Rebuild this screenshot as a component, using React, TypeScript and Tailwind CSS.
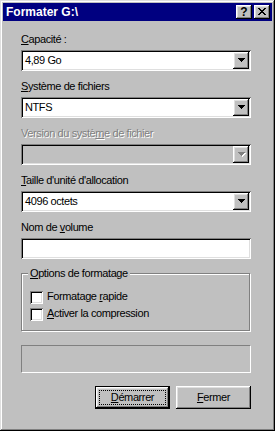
import React from "react";

const raised =
  "shadow-[inset_-1px_-1px_#000,inset_1px_1px_#fff,inset_-2px_-2px_#808080,inset_2px_2px_#dfdfdf]";
const sunken =
  "shadow-[inset_1px_1px_#808080,inset_-1px_-1px_#fff,inset_2px_2px_#000,inset_-2px_-2px_#dfdfdf]";

function Arrow({ disabled }: { disabled?: boolean }) {
  const rows = [
    [0, 7],
    [1, 5],
    [2, 3],
    [3, 1],
  ];
  return (
    <svg width="8" height="5" viewBox="0 0 8 5" shapeRendering="crispEdges">
      {disabled &&
        rows.map(([y, w], i) => (
          <rect key={"s" + i} x={(7 - w) / 2 + 1} y={y + 1} width={w} height={1} fill="#fff" />
        ))}
      {rows.map(([y, w], i) => (
        <rect key={i} x={(7 - w) / 2} y={y} width={w} height={1} fill={disabled ? "#808080" : "#000"} />
      ))}
    </svg>
  );
}

function Combo({ value, disabled }: { value?: string; disabled?: boolean }) {
  return (
    <div
      className={`h-[21px] w-[230px] flex p-[2px] ${disabled ? "bg-[#c0c0c0]" : "bg-white"} ${sunken}`}
    >
      <div className="flex-1 pl-[2px] leading-[17px] whitespace-nowrap">{value}</div>
      <div className={`w-[16px] h-[17px] bg-[#c0c0c0] ${raised} flex items-center justify-center pl-[1px]`}>
        <Arrow disabled={disabled} />
      </div>
    </div>
  );
}

function Label({ children, disabled }: { children: React.ReactNode; disabled?: boolean }) {
  return (
    <div
      className={`h-[13px] leading-[13px] whitespace-nowrap ${
        disabled ? "text-[#808080] [text-shadow:1px_1px_0_#fff]" : "text-black"
      }`}
    >
      {children}
    </div>
  );
}

function Checkbox({ children }: { children: React.ReactNode }) {
  return (
    <div className="flex items-start h-[14px] gap-[4px]">
      <div className={`mt-[1px] w-[13px] h-[13px] bg-white ${sunken}`} />
      <div className="leading-[13px] whitespace-nowrap">{children}</div>
    </div>
  );
}

function CloseGlyph() {
  const px: [number, number][] = [];
  const pattern = [
    "XX....XX",
    ".XX..XX.",
    "..XXXX..",
    "...XX...",
    "..XXXX..",
    ".XX..XX.",
    "XX....XX",
  ];
  pattern.forEach((row, y) =>
    row.split("").forEach((c, x) => {
      if (c === "X") px.push([x, y]);
    })
  );
  return (
    <svg width="8" height="7" viewBox="0 0 8 7" shapeRendering="crispEdges">
      {px.map(([x, y], i) => (
        <rect key={i} x={x} y={y} width={1} height={1} fill="#000" />
      ))}
    </svg>
  );
}

export default function App() {
  return (
    <div
      className={`w-[275px] h-[431px] bg-[#c0c0c0] p-[3px] flex flex-col font-['Liberation_Sans',Arial,sans-serif] text-[11px] tracking-[-0.4px] text-black shadow-[inset_-1px_-1px_#000,inset_1px_1px_#dfdfdf,inset_-2px_-2px_#808080,inset_2px_2px_#fff]`}
    >
      {/* Title bar */}
      <div className="h-[18px] bg-[#000080] flex items-center pl-[3px] pr-[2px]">
        <div className="flex-1 text-white font-bold text-[12px] tracking-normal leading-[18px] whitespace-nowrap">
          Formater G:\
        </div>
        <div className="flex gap-[2px]">
          <div
            className={`w-[16px] h-[14px] bg-[#c0c0c0] ${raised} flex items-center justify-center font-bold text-[12px] leading-[14px] tracking-normal pb-[1px]`}
          >
            ?
          </div>
          <div className={`w-[16px] h-[14px] bg-[#c0c0c0] ${raised} flex items-center justify-center pb-[1px]`}>
            <CloseGlyph />
          </div>
        </div>
      </div>

      {/* Content */}
      <div className="flex flex-col pl-[18px] pr-[21px] pt-[12px]">
        <Label>
          <u>C</u>apacité :
        </Label>
        <div className="mt-[4px]">
          <Combo value="4,89 Go" />
        </div>

        <div className="mt-[9px]">
          <Label>
            <u>S</u>ystème de fichiers
          </Label>
        </div>
        <div className="mt-[4px]">
          <Combo value="NTFS" />
        </div>

        <div className="mt-[9px]">
          <Label disabled>
            Version du systè<u>m</u>e de fichier
          </Label>
        </div>
        <div className="mt-[4px]">
          <Combo disabled />
        </div>

        <div className="mt-[9px]">
          <Label>
            <u>T</u>aille d'unité d'allocation
          </Label>
        </div>
        <div className="mt-[4px]">
          <Combo value="4096 octets" />
        </div>

        <div className="mt-[9px]">
          <Label>
            Nom de <u>v</u>olume
          </Label>
        </div>
        <div className={`mt-[4px] h-[21px] w-[230px] bg-white ${sunken}`} />

        {/* Group box */}
        <div className="mt-[14px] relative w-[229px] h-[58px] border border-[#808080] shadow-[inset_1px_1px_#fff,1px_1px_#fff] pl-[8px] pt-[16px] flex flex-col gap-[3px]">
          <div className="absolute left-[6px] top-[-7px] bg-[#c0c0c0] px-[2px] leading-[13px] whitespace-nowrap">
            <u>O</u>ptions de formatage
          </div>
          <Checkbox>
            Formatage <u>r</u>apide
          </Checkbox>
          <Checkbox>
            <u>A</u>ctiver la compression
          </Checkbox>
        </div>

        {/* Progress */}
        <div className="mt-[14px] h-[28px] w-[230px] border border-t-[#808080] border-l-[#808080] border-b-white border-r-white" />

        {/* Buttons */}
        <div className="mt-[13px] flex justify-end gap-[6px]">
          <div className="w-[75px] h-[23px] border border-black">
            <div
              className={`relative w-full h-full bg-[#c0c0c0] ${raised} flex items-center justify-center leading-[13px]`}
            >
              <div className="absolute left-[3px] right-[3px] top-[3px] bottom-[3px] border border-dotted border-black" />
              <span>
                <u>D</u>émarrer
              </span>
            </div>
          </div>
          <div
            className={`w-[75px] h-[23px] bg-[#c0c0c0] ${raised} flex items-center justify-center leading-[13px]`}
          >
            <span>
              <u>F</u>ermer
            </span>
          </div>
        </div>
      </div>
    </div>
  );
}
